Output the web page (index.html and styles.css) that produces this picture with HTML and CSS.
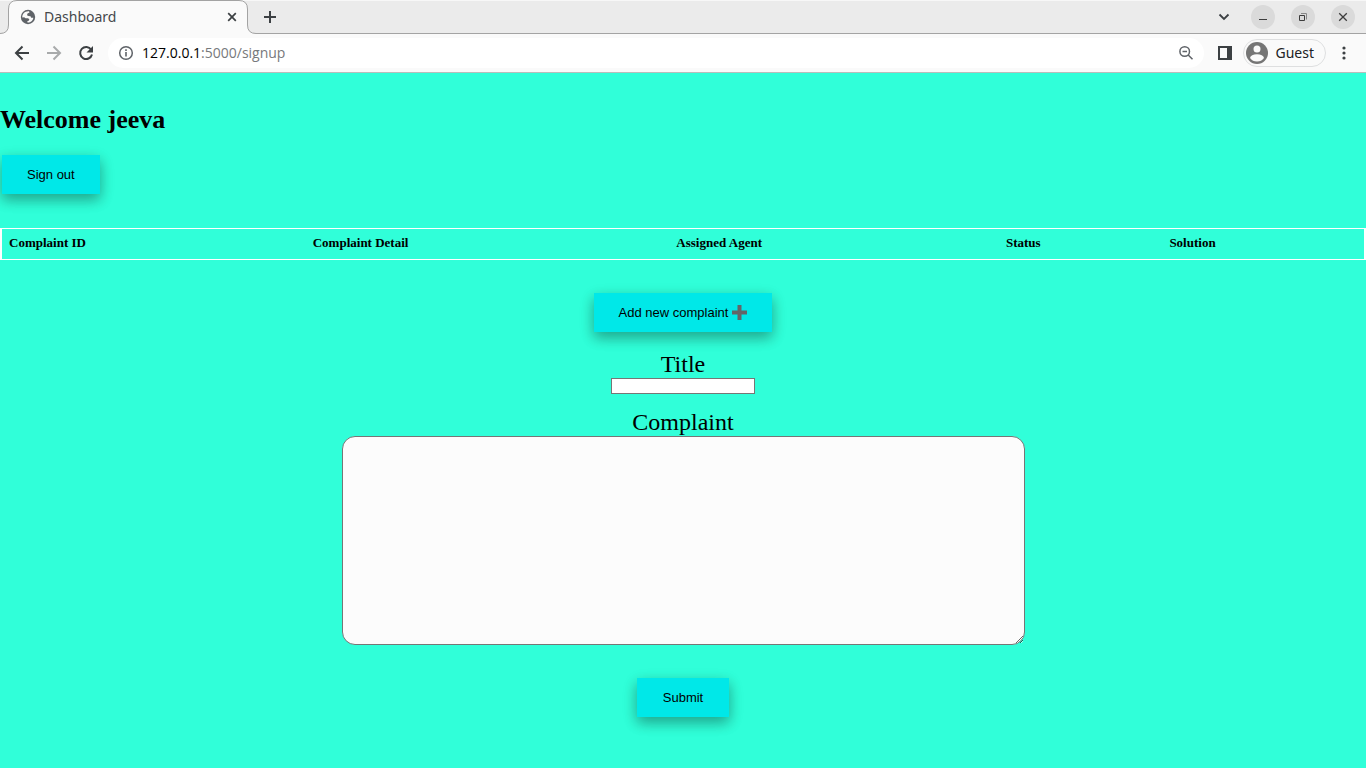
FILE: index.html
```html
<!DOCTYPE html>
<html lang="en">
<head>
<meta charset="utf-8">
<title>Dashboard</title>
<link rel="stylesheet" href="styles.css">
</head>
<body>
<header class="browser">
  <div class="tabstrip">
    <div class="tab">
      <svg class="tab-shape" width="264" height="34" viewBox="0 0 264 34"><path d="M0 33.5Q8.5 33.5 8.500 25V9Q8.500 .5 17 .5H239Q247.500 .5 247.500 9V25Q247.500 33.500 256 33.500V34H0Z" fill="#fafafa"/><path d="M0 33.500Q8.500 33.500 8.500 25V9Q8.500 .5 17 .5H239Q247.500 .5 247.500 9V25Q247.500 33.500 256 33.500H264" fill="none" stroke="#a3a3a3"/></svg>
      <svg class="icon" width="16" height="16" viewBox="0 0 16 16"><circle cx="8" cy="8" r="7.200" fill="#5f6368"/><path d="M9 2.300 9.500 3.500 7.500 4.500 7 6.300 8.500 7 10.500 7.300 11.200 8.700H13.300C13 11.500 10.500 13.700 7.500 13.500L7.300 12.300 9 11.500 9.300 10 7.800 9.200H5.500L4.200 8.200 2.300 8.500C2 5 5 2 9 2.300Z" fill="#fafafa"/></svg>
      <span class="tab-title">Dashboard</span>
      <button class="plain" aria-label="Close tab"><svg width="16" height="16" viewBox="0 0 16 16"><path d="m4.200 4.200 7.600 7.600m0-7.600-7.600 7.600" fill="none" stroke="#3c4043" stroke-width="1.700"/></svg></button>
    </div>
    <button class="plain new-tab" aria-label="New tab"><svg width="16" height="16" viewBox="0 0 16 16"><path d="M8 2v12M2 8h12" stroke="#3c4043" stroke-width="2"/></svg></button>
    <div class="window-controls">
      <button class="plain" aria-label="Search tabs"><svg width="24" height="24" viewBox="0 0 24 24"><path d="m8.500 9.500 4.500 4.500 4.500-4.500" fill="none" stroke="#3c4043" stroke-width="1.800"/></svg></button>
      <button class="plain round" aria-label="Minimize"><svg width="24" height="24" viewBox="0 0 24 24"><path d="M8 14.500h8" stroke="#3d3d3d"/></svg></button>
      <button class="plain round" aria-label="Restore"><svg width="24" height="24" viewBox="0 0 24 24" fill="none"><path d="M10 8.500h5.500v6" stroke="#888"/><path d="M8.500 10.500h5v5h-5z" stroke="#3d3d3d"/></svg></button>
      <button class="plain round" aria-label="Close"><svg width="24" height="24" viewBox="0 0 24 24"><path d="m8.200 8.200 7.600 7.600m0-7.600-7.600 7.600" stroke="#3d3d3d" stroke-width="1.300"/></svg></button>
    </div>
  </div>
  <div class="toolbar">
    <div class="nav">
      <button class="plain" aria-label="Back"><svg width="16" height="16" viewBox="0 0 16 16"><path d="M15 8H2.500M8.500 1.500 2 8l6.500 6.500" fill="none" stroke="#3c4043" stroke-width="2"/></svg></button>
      <button class="plain" aria-label="Forward"><svg width="16" height="16" viewBox="0 0 16 16"><path d="M1 8h12.500M7.500 1.500 14 8l-6.500 6.500" fill="none" stroke="#a8aaab" stroke-width="2"/></svg></button>
      <button class="plain" aria-label="Reload"><svg width="16" height="16" viewBox="0 0 16 16"><path d="M13.200 4.700A6 6 0 1 0 14 9.500" fill="none" stroke="#3c4043" stroke-width="2"/><path d="M15 1v6.500H8.500Z" fill="#3c4043"/></svg></button>
    </div>
    <div class="address">
      <svg width="16" height="16" viewBox="0 0 16 16"><circle cx="8" cy="8" r="6.300" fill="none" stroke="#5f6368" stroke-width="1.500"/><path d="M8 7v4.500M8 4.300V6" stroke="#5f6368" stroke-width="1.600"/></svg>
      <span class="url"><span class="host">127.0.0.1</span>:5000/signup</span>
      <button class="plain" aria-label="Zoom"><svg width="16" height="16" viewBox="0 0 16 16" fill="none" stroke="#5f6368" stroke-width="1.500"><circle cx="6.700" cy="6.500" r="4.800"/><path d="m10.200 10 4.300 4.300M4.500 6.500H9"/></svg></button>
    </div>
    <button class="plain" aria-label="Side panel"><svg width="14" height="14" viewBox="0 0 14 14"><path d="M0 0h14v14H0zM2 2v10h7V2z" fill="#3c4043" fill-rule="evenodd"/></svg></button>
    <button class="profile"><svg width="22" height="22" viewBox="0 0 22 22"><circle cx="11" cy="11" r="11" fill="#757575"/><circle cx="11" cy="7" r="3.500" fill="#fafafa"/><path d="M4 16Q5 12.300 11 12.300T18 16Q15.500 19.500 11 19.500T4 16Z" fill="#fafafa"/></svg>Guest</button>
    <button class="plain" aria-label="Menu"><svg width="16" height="16" viewBox="0 0 16 16" fill="#3c4043"><circle cx="8" cy="3" r="1.600"/><circle cx="8" cy="8" r="1.600"/><circle cx="8" cy="13" r="1.600"/></svg></button>
  </div>
</header>
<main>
  <h1>Welcome jeeva</h1>
  <button class="action sign-out">Sign out</button>
  <table class="complaints">
    <colgroup><col class="col-id"><col class="col-detail"><col class="col-agent"><col class="col-status"><col></colgroup>
    <thead><tr><th scope="col">Complaint ID</th><th scope="col">Complaint Detail</th><th scope="col">Assigned Agent</th><th scope="col">Status</th><th scope="col">Solution</th></tr></thead>
  </table>
  <form class="complaint-form">
    <button class="action add" type="button">Add new complaint <svg width="15" height="15" viewBox="0 0 15 15"><path d="M5.500 0h4v5.500H15v4H9.500V15h-4V9.500H0v-4h5.500z" fill="#636568"/></svg></button>
    <div class="field"><label for="title">Title</label><input id="title" type="text"></div>
    <div class="field"><label for="complaint">Complaint</label><textarea id="complaint"></textarea></div>
    <button class="action submit" type="submit">Submit</button>
  </form>
</main>
</body>
</html>
```
FILE: styles.css
```css
* { box-sizing: border-box; }
body {
  margin: 0;
  min-height: 100vh;
  background: #30ffd9;
  color: #000;
  font-family: "Liberation Serif", serif;
}
svg { display: block; flex: none; }

.browser {
  background: #fafafa;
  border-bottom: 1px solid #b9bdbb;
  font: 14px/20px "Noto Sans", sans-serif;
}
.plain {
  display: flex;
  padding: 0;
  border: 0;
  background: none;
}
.tabstrip {
  display: flex;
  align-items: center;
  height: 34px;
  background: #ebebeb;
  border-top: 1px solid #f7f7f7;
  border-bottom: 1px solid #a3a3a3;
}
.tab {
  position: relative;
  display: flex;
  align-items: center;
  gap: 8px;
  width: 240px;
  padding: 0 8px 0 12px;
  margin-left: 8px;
}
.tab-shape {
  position: absolute;
  left: -8px;
  top: -7px;
}
.tab > :not(.tab-shape) { position: relative; }
.tab-title { flex: 1; color: #45484b; }
.new-tab { margin-left: 14px; }
.window-controls {
  display: flex;
  gap: 16px;
  margin-left: auto;
  padding-right: 11px;
}
.round { border-radius: 50%; background: #dadada; }

.toolbar {
  display: flex;
  align-items: center;
  height: 38px;
  padding: 0 14px;
}
.nav { display: flex; gap: 16px; margin-right: 14px; }
.address {
  display: flex;
  flex: 1;
  align-items: center;
  gap: 8px;
  height: 30px;
  padding: 0 10px;
  margin-right: 14px;
  border-radius: 15px;
  background: #fff;
}
.url { flex: 1; color: #77797c; font-family: "Open Sans", sans-serif; }
.host { color: #000; }
.profile {
  display: flex;
  align-items: center;
  gap: 8px;
  height: 28px;
  margin: 0 10px 0 11px;
  padding: 0 11px 0 2px;
  border: 1px solid #dedfe0;
  border-radius: 14px;
  background: #fafafa;
  color: #202124;
  font: inherit;
}

h1 { margin: 0; padding: 32px 0 20px; font-size: 26px; line-height: 30px; }
.action {
  padding: 12px 25px;
  border: 0;
  background: #00e8e8;
  color: #000;
  font: 13px/15px "Liberation Sans", sans-serif;
  box-shadow: 0 6px 13px rgba(0, 0, 0, .2), 0 5px 15px rgba(0, 0, 0, .19);
}
.sign-out { display: block; margin: 0 2px 34px; }
.complaints {
  width: 100%;
  table-layout: fixed;
  border-spacing: 0;
  border: solid #fff;
  border-width: 1px 2px;
}
.complaints th {
  padding: 6px 7px 9px;
  font-size: 13px;
  line-height: 15px;
  text-align: left;
}
.col-id { width: 22.3%; }
.col-detail { width: 26.7%; }
.col-agent { width: 24.2%; }
.col-status { width: 12%; }

.complaint-form {
  display: flex;
  flex-direction: column;
  align-items: center;
  padding: 33px 0;
}
.add {
  display: flex;
  align-items: center;
  gap: 4px;
  margin-bottom: 4px;
}
.field {
  display: flex;
  flex-direction: column;
  align-items: center;
  width: 100%;
  padding-top: 14px;
  font-size: 24px;
  line-height: 28px;
}
#title {
  width: 144px;
  height: 16px;
  padding: 1px 2px;
  border: 1px solid #767676;
  background: #fff;
  font: 11px "Liberation Sans", sans-serif;
}
#title, #complaint { margin: 0; }
#complaint {
  width: 50%;
  height: 209px;
  border: 1px solid #767676;
  border-radius: 13px;
  background: #fcfcfc;
}
.submit { margin-top: 33px; padding: 12px 26px; }
```
